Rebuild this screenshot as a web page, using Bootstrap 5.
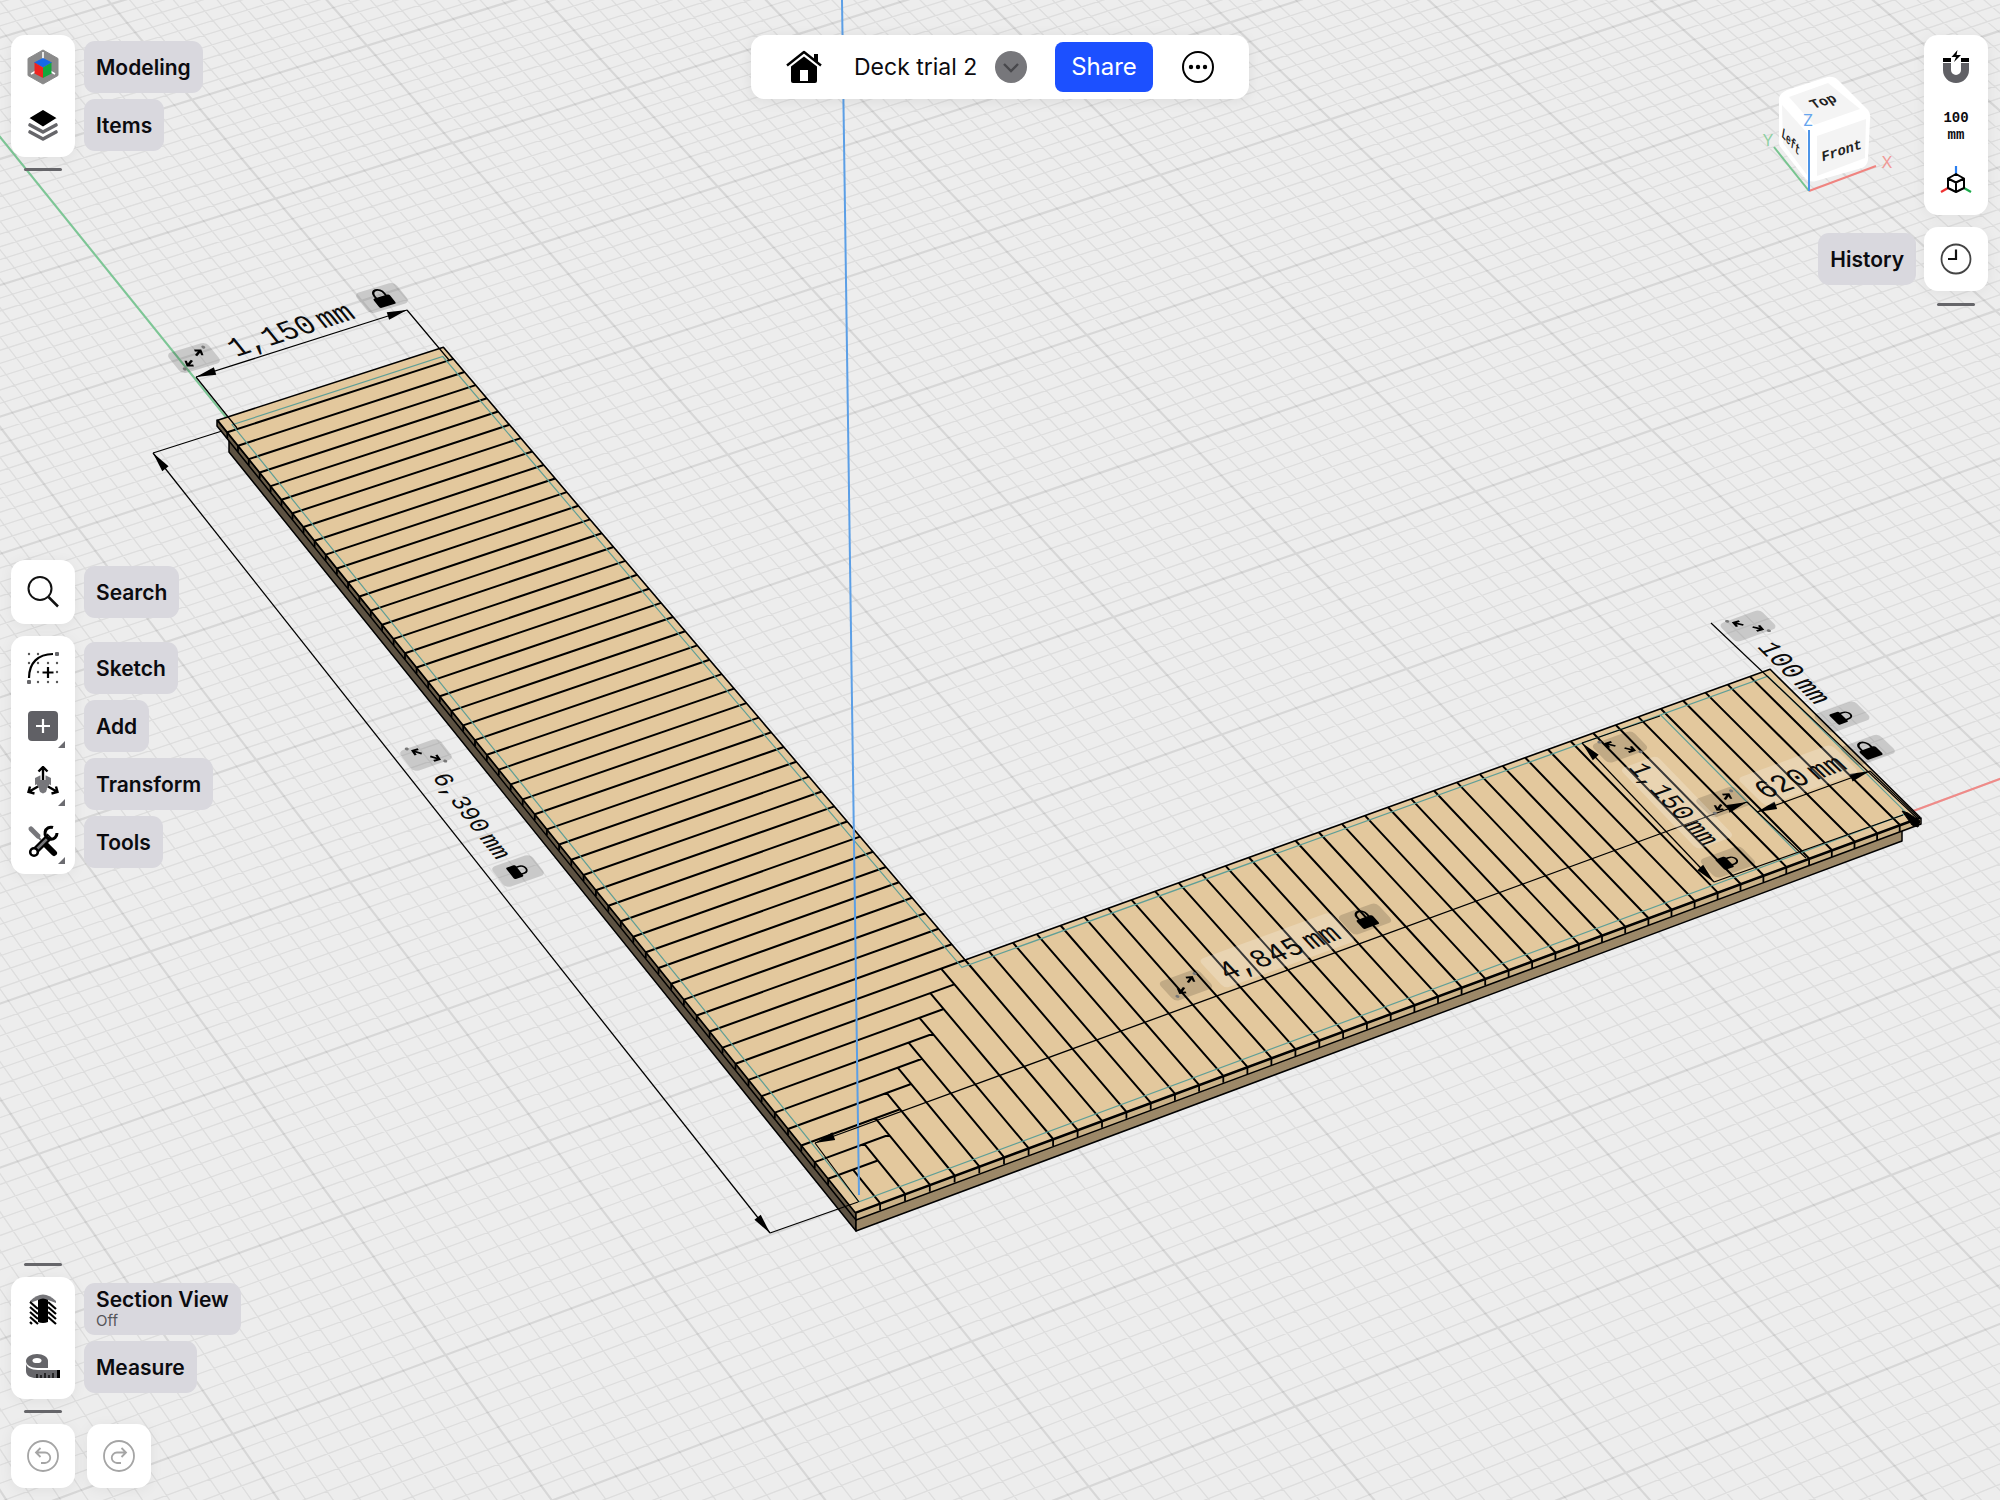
<!DOCTYPE html>
<html lang="en">
<head>
<meta charset="utf-8">
<meta name="viewport" content="width=device-width, initial-scale=1">
<title>Deck trial 2</title>
<link href="https://cdn.jsdelivr.net/npm/bootstrap@5.3.0/dist/css/bootstrap.min.css" rel="stylesheet">
<style>
  body { background: #ededed; color: #0b0b0f; font-family: Inter, "Liberation Sans", sans-serif; }
  .scene { position: absolute; inset: 0; width: 100%; height: 100%; }
  .shell { position: relative; padding: 35px 12px 12px 11px; pointer-events: none; }
  .shell button { pointer-events: auto; }
  .side { gap: 11px; }
  .tile { width: 64px; padding: 3px 0; background: #fff; border-radius: 14px; box-shadow: 0 2px 14px rgba(0,0,0,.06); }
  .tile button, .solo { display: flex; align-items: center; justify-content: center; position: relative; width: 64px; height: 58px; padding: 0; border: 0; background: none; }
  .solo { height: 64px; background: #fff; border-radius: 14px; box-shadow: 0 2px 14px rgba(0,0,0,.06); color: #a5a5a5; }
  .tile svg, .solo svg { width: 36px; height: 36px; }
  .tile .more::after { content: ""; position: absolute; right: 10px; bottom: 7px; border-left: 7px solid transparent; border-bottom: 7px solid #6b6b70; }
  .chips { gap: 6px; padding: 6px 0; margin-left: 9px; }
  .chip { height: 52px; padding: 1px 12px 0; border: 0; border-radius: 11px; background: #d9d8de; font-size: 21px; font-weight: 600; line-height: 22px; color: #0b0b0f; text-align: left; white-space: nowrap; }
  .chip span { display: block; font-size: 15px; font-weight: 400; line-height: 20px; color: #55555a; }
  .grip { width: 38px; height: 3px; margin: 0 13px; border-radius: 2px; background: #66666a; }
  .gap12 { gap: 12px; }
  .titlebar { position: absolute; top: 35px; left: 50%; transform: translateX(-50%); height: 64px; width: 498px; padding: 0 34px; background: #fff; border-radius: 14px; box-shadow: 0 2px 14px rgba(0,0,0,.08); font-size: 24px; }
  .titlebar button { border: 0; background: none; padding: 0; line-height: 1; }
  .titlebar .share { height: 50px; width: 98px; border-radius: 8px; background: #1c50ff; color: #fff; }
  .doc-name { font-size: 23px; margin: 0 18px 0 31px; }
  .snap { font: 700 14px/17px "Liberation Mono", monospace; color: #0b0b0f; }
  .navcube { width: 140px; height: 150px; margin: 30px 24px 0 0; }
  .dim text { font-family: "Liberation Mono", monospace; text-anchor: middle; fill: #0b0b0b; }
</style>
<script src="https://cdn.jsdelivr.net/npm/bootstrap@5.3.0/dist/js/bootstrap.bundle.min.js"></script>
</head>
<body class="min-vh-100 position-relative overflow-hidden">

<svg class="scene" viewBox="0 0 2000 1500" preserveAspectRatio="xMidYMid slice" role="img" aria-label="Deck model">
  <defs>
    <g id="lock"><path d="M-6 -1v-4a6 6 0 0 1 12 0v4" fill="none" stroke="#000" stroke-width="2.4"/><rect x="-10" y="-2" width="20" height="13" rx="2"/></g>
    <g id="span"><path d="M-4 0H-12M-8.500 -4l-4 4 4 4M4 0H12M8.500 -4l4 4-4 4" fill="none" stroke="#000" stroke-width="2.200"/><circle cx="-18" r="1.800" fill="#777"/><circle cx="18" r="1.800" fill="#777"/></g>
  </defs>
  <path id="minor" fill="none" stroke="#000" stroke-opacity=".065" stroke-width="1.300"/>
  <path id="major" fill="none" stroke="#000" stroke-opacity=".09" stroke-width="2.200"/>
  <path id="axisY" fill="none" stroke="#7cc795" stroke-width="2"/>
  <path id="axisX" fill="none" stroke="#f08a88" stroke-width="2"/>
  <g stroke="#000" stroke-width="1.500" stroke-linejoin="round">
    <path d="M229 430V452L856 1231V1213z" fill="#5d5242"/>
    <path d="M856 1213V1231L1902 841V820z" fill="#9c8868"/>
    <path d="M217 420v6L856 1220v-7z" fill="#6b5d48"/>
    <path d="M856 1213v7L1921 824v-6z" fill="#cbb288"/>
  </g>
  <path id="deck" fill="#e3c89d" stroke="#000" stroke-width="1.600" stroke-linejoin="round"/>
  <path id="planks" fill="none" stroke="#000" stroke-width="2"/>
  <path id="ends" fill="none" stroke="#000" stroke-width="1.800"/>
  <path id="sketch" fill="none" stroke="#5f9f97" stroke-width="1.200"/>
  <path d="M1711 623L1917 818" fill="none" stroke="#000" stroke-width="1.200"/>
  <path d="M842 0L859 1195" stroke="#5c9fe6" stroke-width="2"/>
  <g id="dims" class="dim"></g>
</svg>

<div class="shell d-flex justify-content-between vh-100">
  <aside class="d-flex flex-column justify-content-between">
    <section class="side d-flex flex-column">
      <div class="d-flex">
        <div class="tile">
          <button type="button" aria-label="Modeling"><svg viewBox="0 0 36 36"><path d="M18 1l15 8.500v17L18 35 3 26.500v-17z" fill="#8a8a8a" stroke="#8a8a8a" stroke-width="1" stroke-linejoin="round"/><path d="M18 3v8M6 25l6-3.500M30 25l-6-3.500" stroke="#fff" stroke-width="1.600"/><path d="M18 9l9 4.500-9 5-9-5z" fill="#1668e8"/><path d="M9.500 13.500l8.500 5v10.500l-8.500-4.500z" fill="#ee2420"/><path d="M26.500 13.500l-8.500 5v10.500l8.500-4.500z" fill="#12a83c"/></svg></button>
          <button type="button" aria-label="Items"><svg viewBox="0 0 36 36"><path d="M5 25l13 7 13-7" fill="none" stroke="#66666a" stroke-width="3.600" stroke-linejoin="round" stroke-linecap="round"/><path d="M5 18l13 7 13-7" fill="none" stroke="#fff" stroke-width="6"/><path d="M5 18l13 7 13-7" fill="none" stroke="#66666a" stroke-width="3.600" stroke-linejoin="round" stroke-linecap="round"/><path d="M18 2l15 9L18 20.500 3 11z" stroke="#fff" stroke-width="1.500" stroke-linejoin="round"/></svg></button>
        </div>
        <div class="chips d-flex flex-column align-items-start">
          <button type="button" class="chip">Modeling</button><button type="button" class="chip">Items</button>
        </div>
      </div>
      <div class="grip"></div>
    </section>

    <section class="d-flex flex-column gap12">
      <div class="d-flex">
        <button type="button" class="solo" aria-label="Search"><svg viewBox="0 0 36 36" fill="none" stroke="#111" stroke-width="2"><circle cx="15" cy="14.500" r="11.500"/><path d="M23.500 23L33 32.500" stroke-width="2.500"/></svg></button>
        <div class="chips d-flex flex-column align-items-start"><button type="button" class="chip">Search</button></div>
      </div>
      <div class="d-flex">
        <div class="tile">
          <button type="button" aria-label="Sketch"><svg viewBox="0 0 36 36"><g fill="#555"><circle cx="4" cy="4" r="1.200"/><circle cx="13" cy="4" r="1.200"/><circle cx="4" cy="13" r="1.200"/><circle cx="13" cy="13" r="1.200"/><circle cx="23" cy="13" r="1.200"/><circle cx="32" cy="13" r="1.200"/><circle cx="13" cy="22" r="1.200"/><circle cx="32" cy="22" r="1.200"/><circle cx="13" cy="32" r="1.200"/><circle cx="23" cy="32" r="1.200"/><circle cx="32" cy="32" r="1.200"/></g><path d="M4 28C4 13 13 4 28 4M23 17v11M17.500 22.500h11" fill="none" stroke="#000" stroke-width="2.200"/><rect x="30" y="2" width="4" height="4" rx="1" fill="#66666a"/><rect x="2" y="30" width="4" height="4" rx="1" fill="#66666a"/></svg></button>
          <button type="button" class="more" aria-label="Add"><svg viewBox="0 0 36 36"><rect x="3" y="3" width="30" height="30" rx="4" fill="#606065"/><path d="M18 11v14M11 18h14" stroke="#fff" stroke-width="2.200"/></svg></button>
          <button type="button" class="more" aria-label="Transform"><svg viewBox="0 0 36 36"><path d="M10 12l5-2.500h6l5 2.500v9l-4 2-1 3-3 1.500-3-1.500-1-3-4-2z" fill="#77777b"/><path d="M18 14V1M13 5.500L18 1l5 4.500M13 20.500L3 26.500M4 20.500l-1 6 7 1M23 20.500l10 6M32 20.500l1 6-7 1" fill="none" stroke="#fff" stroke-width="5"/><path d="M18 14V1M13.500 5.500L18 1l4.500 4.500M13 20.500L3.500 26M5 20.500l-1.500 5.500 6 1.500M23 20.500l9.500 5.500M31 20.500l1.500 5.500-6 1.500" fill="none" stroke="#000" stroke-width="2.400"/></svg></button>
          <button type="button" class="more" aria-label="Tools"><svg viewBox="0 0 36 36"><path d="M6 5l7 7" stroke="#77777b" stroke-width="5" stroke-linecap="round"/><path d="M11 11l5 5" stroke="#77777b" stroke-width="2"/><path d="M22 22l7 7" stroke="#000" stroke-width="6" stroke-linecap="round"/><path d="M11 26L25 12" stroke="#000" stroke-width="7"/><path d="M12 25L24 13" stroke="#77777b" stroke-width="2.500"/><circle cx="9" cy="28" r="3.800" fill="#fff" stroke="#000" stroke-width="2.600"/><path d="M28 3.500a6 6 0 1 0 4 5.500" fill="none" stroke="#000" stroke-width="3"/></svg></button>
        </div>
        <div class="chips d-flex flex-column align-items-start">
          <button type="button" class="chip">Sketch</button><button type="button" class="chip">Add</button><button type="button" class="chip">Transform</button><button type="button" class="chip">Tools</button>
        </div>
      </div>
    </section>

    <section class="side d-flex flex-column">
      <div class="grip"></div>
      <div class="d-flex">
        <div class="tile">
          <button type="button" aria-label="Section View"><svg viewBox="0 0 36 36"><path d="M5 10q13-13 26 0v4H5z" fill="#77777b"/><path d="M5 12l8-3v24H5zM31 12l-8-3v24h8z" fill="#fff"/><path d="M5 11l8 7M5 16l8 7M5 21l8 7M5 26l8 7M5 31l2 2M23 11l8 7M23 16l8 7M23 21l8 7M23 26l8 7" stroke="#000" stroke-width="2.200"/><path d="M13 9q5-3 10 0v22q-5 2-10 0z"/></svg></button>
          <button type="button" aria-label="Measure"><svg viewBox="0 0 36 36"><path d="M1 14v8c0 5 5 7 10 7h24v-8H13C6 21 1 18 1 14z" fill="#66666a"/><path d="M1 12c0-4 5-7 11-7s11 3 11 7v7H12C6 19 1 16 1 12z" fill="#66666a"/><ellipse cx="12" cy="11.500" rx="4.500" ry="2.600" fill="#fff"/><path d="M28 24v5M24 26v3M20 24v5M16 26v3M12 25v4" stroke="#111" stroke-width="1.500"/><path d="M33.500 21v8" stroke="#000" stroke-width="3"/></svg></button>
        </div>
        <div class="chips d-flex flex-column align-items-start">
          <button type="button" class="chip">Section View<span>Off</span></button><button type="button" class="chip">Measure</button>
        </div>
      </div>
      <div class="grip"></div>
      <div class="d-flex gap12">
        <button type="button" class="solo" aria-label="Undo"><svg viewBox="0 0 36 36" fill="none" stroke="currentColor" stroke-width="1.800"><circle cx="18" cy="18" r="15"/><path d="M15.500 10L11 14.500l4.500 4.500M11 14.500h9a5 5 0 0 1 0 10.500h-4"/></svg></button>
        <button type="button" class="solo" aria-label="Redo"><svg viewBox="0 0 36 36" fill="none" stroke="currentColor" stroke-width="1.800"><circle cx="18" cy="18" r="15"/><path d="M20.500 10l4.500 4.500-4.500 4.500M25 14.500h-9a5 5 0 0 0 0 10.500h4"/></svg></button>
      </div>
    </section>
  </aside>

  <aside class="d-flex flex-column gap12">
    <div class="d-flex align-items-start justify-content-end">
      <svg class="navcube" viewBox="1760 65 140 150" role="img" aria-label="View cube">
        <path d="M1779 98q1-5 8-8l40-13q7-1 11 3l30 30q3 4 2 10l-2 40q-1 6-6 8l-46 13q-7 2-12-4l-22-28q-4-4-3-9z" fill="#fff"/>
        <path d="M1789 97l39-14 32 26-46 16z" fill="#f4f4f4"/><path d="M1782 105l25 28v42l-24-32z" fill="#f4f4f4"/><path d="M1817 136l49-17-1 39-48 18z" fill="#f4f4f4"/>
        <g font-family="Liberation Mono, monospace" font-weight="700" font-size="14" text-anchor="middle" fill="#222">
          <text transform="translate(1826 105) rotate(-17) skewX(21)">Top</text>
          <text transform="translate(1842 155) rotate(-18) skewX(-14)">Front</text>
          <text transform="translate(1790 146) rotate(48) skewX(38)" font-size="11">Left</text>
        </g>
        <g stroke-width="2" fill="none"><path d="M1774 147l35 44" stroke="#77c48f"/><path d="M1809 191l67-25" stroke="#f08480"/><path d="M1809 191v-61" stroke="#4c94e8"/></g>
        <g font-family="Inter, sans-serif" font-size="16" text-anchor="middle"><text x="1768" y="146" fill="#8fd0a2">Y</text><text x="1887" y="168" fill="#f19a97">X</text><text x="1808" y="126" fill="#66a5ee">Z</text></g>
      </svg>
      <div class="tile">
        <button type="button" aria-label="Snapping"><svg viewBox="0 0 36 36"><path d="M5 14v7a13 13 0 0 0 26 0v-7h-8v7a5 5 0 0 1-10 0v-7z" fill="#606065"/><path d="M5 9h8v4H5zM23 9h8v4h-8z"/><path d="M19.500 1l-6 7h4.500l-2 5 7-7h-4.500z"/></svg></button>
        <button type="button" class="snap flex-column pt-1"><span>100</span><span>mm</span></button>
        <button type="button" aria-label="Axes"><svg viewBox="0 2 36 36" fill="none"><path d="M18 11V3" stroke="#2a7ff0" stroke-width="2.200"/><path d="M10 25l-7 4" stroke="#e33" stroke-width="2.200"/><path d="M26 25l7 4" stroke="#1caa4c" stroke-width="2.200"/><path d="M18 11l8 4.500v9.500l-8 4-8-4v-9.500zM10 15.500l8 4 8-4M18 19.500v9" stroke="#000" stroke-width="2" stroke-linejoin="round"/></svg></button>
      </div>
    </div>
    <div class="d-flex justify-content-end">
      <div class="chips me-2"><button type="button" class="chip">History</button></div>
      <button type="button" class="solo" aria-label="History"><svg viewBox="0 0 36 36" fill="none"><circle cx="18" cy="18" r="14.500" stroke="#444" stroke-width="1.800"/><path d="M18 8.500V18H10" stroke="#111" stroke-width="2.200"/></svg></button>
    </div>
    <div class="grip align-self-end"></div>
  </aside>
</div>

<header class="titlebar d-flex align-items-center">
  <button type="button" aria-label="Home"><svg width="38" height="38" viewBox="0 0 38 38"><path d="M2 17.500L19 4l17 13.500" fill="none" stroke="#000" stroke-width="2.400" stroke-linejoin="round"/><path d="M29 6h4v9l-4-3z"/><path d="M19 8.500l13 10V33a2 2 0 0 1-2 2H8a2 2 0 0 1-2-2V18.500z"/><path d="M15 22h8v11h-8z" fill="#fff"/></svg></button>
  <span class="doc-name text-nowrap">Deck trial 2</span>
  <button type="button" aria-label="Project menu"><svg width="32" height="32" viewBox="0 0 32 32"><circle cx="16" cy="16" r="16" fill="#77777b"/><path d="M9 13l7 7 7-7" fill="none" stroke="#48484c" stroke-width="2.400"/></svg></button>
  <button type="button" class="share ms-auto">Share</button>
  <button type="button" class="ms-4 ps-1" aria-label="More"><svg width="34" height="34" viewBox="0 0 34 34"><circle cx="17" cy="17" r="15" fill="none" stroke="#000" stroke-width="2"/><circle cx="10" cy="17" r="2.200"/><circle cx="17" cy="17" r="2.200"/><circle cx="24" cy="17" r="2.200"/></svg></button>
</header>

<script>
// Camera: least-squares homography from deck coordinates (one unit = one plank pitch) to the viewport.
const pins = [[0,0,856,1213.3],[0,10,722.7,1046.7],[0,22,571,860.7],[0,31,463.3,725.7],[0,43,326,555],[0,52.9,217,420],
  [10,52.9,444,347.3],[10,10,964,958.7],[16,10,1108.3,907.3],[38,10,1616,725.7],[44.9,10,1770,668.3],[44.9,0,1920,818.3],[10,0,1101.7,1121]];
const N = Array.from({length:8}, () => Array(9).fill(0));
const addRow = r => { for (let i=0;i<8;i++) for (let j=0;j<9;j++) N[i][j] += r[i]*r[j]; };
for (const [x,y,a,b] of pins) {
  const u=x/50, v=y/50, s=a/1000, t=b/1000;
  addRow([u,v,1,0,0,0,-u*s,-v*s,s]); addRow([0,0,0,u,v,1,-u*t,-v*t,t]);
}
for (let i=0;i<8;i++) {
  let m=i; for (let r=i;r<8;r++) if (Math.abs(N[r][i])>Math.abs(N[m][i])) m=r;
  [N[i],N[m]]=[N[m],N[i]];
  for (let r=0;r<8;r++) if (r!==i) { const f=N[r][i]/N[i][i]; for (let c=i;c<9;c++) N[r][c]-=f*N[i][c]; }
}
const H = N.map((r,i) => r[8]/r[i]);
const P = (x,y) => { const u=x/50, v=y/50, w=H[6]*u+H[7]*v+1;
  return [(H[0]*u+H[1]*v+H[2])/w*1000, (H[3]*u+H[4]*v+H[5])/w*1000]; };
const fmt = p => p.map(n => n.toFixed(1)).join(' ');
const line = (a,b,c,d) => 'M'+fmt(P(a,b))+'L'+fmt(P(c,d));
const poly = pts => 'M'+pts.map(p => fmt(P(...p))).join('L')+'Z';
const set = (id,d) => document.getElementById(id).setAttribute('d', d);

// Ground grid: 100 mm cells, heavier line every ten.
const cell = 100/123, ox = .38, oy = .42;
let minor='', major='';
for (let i=-110;i<=230;i++) {
  const p = i*cell, s = line(ox+p,-90,ox+p,190)+line(-90,oy+p,190,oy+p);
  if (i%10===0) major+=s; else minor+=s;
}
set('minor',minor); set('major',major);
set('axisY', line(ox,0,ox,190)); set('axisX', line(0,oy,190,oy));

// Deck outline, planks and their visible ends.
set('deck', poly([[0,0],[0,52.9],[10,52.9],[10,10],[44.9,10],[44.9,0]]));
let planks='', ends='';
for (let k=2;k<=52;k++) { planks += line(0,k,Math.min(k,10),k); const p=P(0,k); ends += `M${fmt(p)}v6`; }
for (let k=1;k<=44;k++) { planks += line(k,0,k,Math.min(k+1,10)); const p=P(k,0); ends += `M${fmt(p)}v7`; }
set('planks',planks); set('ends',ends);
set('sketch', poly([[.38,.42],[.38,52.35],[9.7,52.35],[9.7,9.7],[44.6,9.7],[44.6,.42]])+line(39.8,9.7,39.8,.42));

// Dimensions
const dims = document.getElementById('dims');
const arrow = (x,y,tx,ty) => { const a=Math.atan2(ty-y,tx-x)*180/Math.PI;
  return `<path transform="translate(${x} ${y}) rotate(${a})" d="M0 0L20 -4V4z"/>`; };
const dimLine = (a,b,c,d) => `<path d="M${a} ${b}L${c} ${d}" stroke="#000" stroke-width="1.300"/>`+arrow(a,b,c,d)+arrow(c,d,a,b);
const place = (x,y,base,up,body) => `<g transform="translate(${x} ${y}) rotate(${base}) skewX(${base-up})">${body}</g>`;
const badge = (tall,icon) => `<rect ${tall?'x="-13" y="-20" width="26" height="40"':'x="-21" y="-12" width="42" height="24"'} rx="5" opacity=".15"/><use href="#${icon}" transform="${icon==='lock'?`scale(${tall?.72:.85})`:`rotate(${tall?-42:-27}) scale(.95)`}"/>`;
const label = (num,size,back) => (back?`<rect x="${-back/2}" y="-19" width="${back}" height="36" rx="5" fill="#fff" opacity=".22"/>`:'')+`<text y="10" font-size="${size}">${num}<tspan dx="5">mm</tspan></text>`;
const ext = d => `<path d="${d}" fill="none" stroke="#000" stroke-width="1.200"/>`;
dims.innerHTML =
  dimLine(196,377,407,310)+ext('M196 377L237 428M407 310L449 360')+
  place(194,358,-17,-39,badge(false,'span'))+place(290,329,-18,-39,label('1,150',29))+place(382,298,-17,-39,badge(false,'lock'))+
  dimLine(153,453,770,1233)+ext('M153 453L222 431M770 1233L858 1202')+
  place(426,755,52,71,badge(true,'span'))+place(474,815,52,71,label('6,390',24))+place(518,871,52,71,badge(true,'lock'))+
  dimLine(815,1143,1747,802)+ext('M815 1143L859 1202M1747 802L1806 858')+
  place(1186,985,-20,-43,badge(false,'span'))+place(1278,951,-20,-43,label('4,845',28,140))+place(1365,919,-20,-43,badge(false,'lock'))+
  dimLine(1757,812,1870,771)+ext('M1870 771L1919 818')+
  place(1723,802,-20,-46,badge(false,'span'))+place(1799,776,-20,-46,label('620',28,100))+place(1868,750,-20,-46,badge(false,'lock'))+
  dimLine(1582,743,1714,882)+ext('M1582 743L1660 716M1714 882L1903 815')+
  place(1620,747,46,70,badge(true,'span'))+place(1676,803,46,70,label('1,150',25,112))+place(1728,862,46,70,badge(true,'lock'))+
  place(1748,626,45,70,badge(true,'span'))+place(1796,672,45,70,label('100',26))+place(1842,717,45,70,badge(true,'lock'))+
  '<path d="M1902 811l6 2 12 8-2 6-6-2z" stroke="#000"/>';
</script>
</body>
</html>
